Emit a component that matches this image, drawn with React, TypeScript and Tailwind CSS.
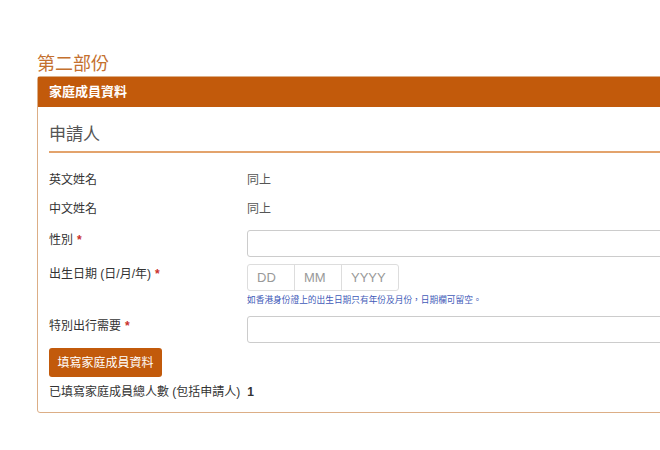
const font = { fontFamily: '"Liberation Sans", "Noto Sans CJK TC", sans-serif' }

function Label({ text, required }: { text: string; required?: boolean }) {
  return (
    <div className="w-[198px] shrink-0 text-[12px] text-[#333]">
      {text}
      {required && <span className="ml-1 font-bold text-[#c9302c]">*</span>}
    </div>
  )
}

export default function App() {
  return (
    <div className="h-[450px] w-[660px] overflow-hidden bg-white" style={font}>
      <div className="pl-[37px] pt-[52px]">
        <h2 className="text-[18px] leading-[24px] text-[#c4702e]">第二部份</h2>
        <div className="w-[700px] rounded-[3px] border border-[#dcae86]">
          <div className="flex h-[30px] items-center bg-[#c25a0b] px-[11px] text-[13px] font-bold text-white">
            家庭成員資料
          </div>
          <div className="px-[11px] pb-[11px]">
            <div className="border-b-2 border-[#e3a36c] pt-[16px] pb-[4px] text-[17px] leading-[24px] text-[#555]">
              申請人
            </div>

            <div className="mt-[17px] flex items-center leading-[20px]">
              <Label text="英文姓名" />
              <div className="text-[12px] text-[#555]">同上</div>
            </div>
            <div className="mt-[9px] flex items-center leading-[20px]">
              <Label text="中文姓名" />
              <div className="text-[12px] text-[#555]">同上</div>
            </div>

            <div className="mt-[11px] flex items-start">
              <div className="leading-[20px]">
                <Label text="性別" required />
              </div>
              <div className="h-[27px] flex-1 rounded-[3px] border border-[#ccc]" />
            </div>

            <div className="mt-[7px] flex items-start">
              <div className="leading-[20px]">
                <Label text="出生日期 (日/月/年)" required />
              </div>
              <div>
                <div className="flex h-[27px] w-[152px] rounded-[3px] border border-[#ddd] text-[13px] text-[#999]">
                  <div className="flex w-[47px] items-center border-r border-[#ddd] pl-[9px]">DD</div>
                  <div className="flex w-[47px] items-center border-r border-[#ddd] pl-[9px]">MM</div>
                  <div className="flex flex-1 items-center pl-[9px]">YYYY</div>
                </div>
                <div className="mt-[3px] text-[8.7px] leading-[12px] text-[#3f5bb8]">
                  如香港身份證上的出生日期只有年份及月份，日期欄可留空。
                </div>
              </div>
            </div>

            <div className="mt-[10px] flex items-start">
              <div className="leading-[20px]">
                <Label text="特別出行需要" required />
              </div>
              <div className="h-[27px] flex-1 rounded-[3px] border border-[#ccc]" />
            </div>

            <button className="mt-[5px] h-[29px] w-[113px] rounded-[3px] bg-[#c25a0b] text-[12px] text-white">
              填寫家庭成員資料
            </button>

            <div className="mt-[6px] flex text-[12px] leading-[18px] text-[#333]">
              <span>已填寫家庭成員總人數 (包括申請人)</span>
              <span className="ml-[7px] font-bold">1</span>
            </div>
          </div>
        </div>
      </div>
    </div>
  )
}
